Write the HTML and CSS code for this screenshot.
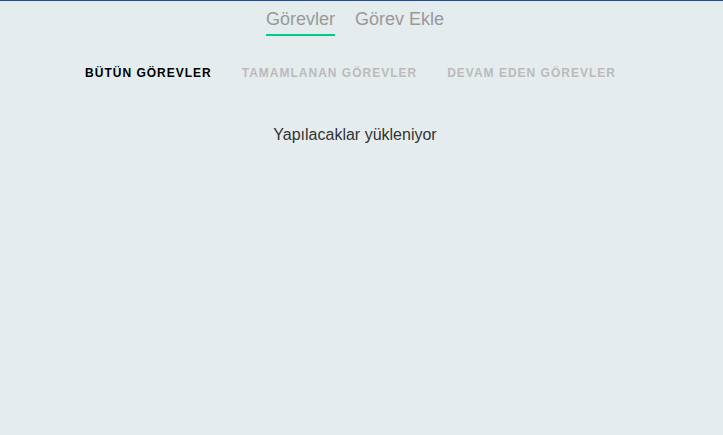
FILE: index.html
```html
<!DOCTYPE html>
<html>
<head>
<meta charset="utf-8">
<link rel="stylesheet" href="styles.css">
</head>
<body>
<div class="page">
  <nav class="nav">
    <a class="nav-link active">Görevler</a>
    <a class="nav-link">Görev Ekle</a>
  </nav>
  <div class="tabs">
    <span class="tab active">BÜTÜN GÖREVLER</span>
    <span class="tab">TAMAMLANAN GÖREVLER</span>
    <span class="tab">DEVAM EDEN GÖREVLER</span>
  </div>
  <p class="loading">Yapılacaklar yükleniyor</p>
</div>
</body>
</html>
```
FILE: styles.css
```css
html, body {
  margin: 0;
  padding: 0;
  height: 100%;
}
body {
  background: #e4ecee;
  border-top: 1px solid #2f4b7c;
  box-sizing: border-box;
  font-family: "Liberation Sans", Arial, sans-serif;
}
.page {
  width: 710px;
  display: flex;
  flex-direction: column;
  align-items: center;
}
.nav {
  display: flex;
  gap: 20px;
  padding-top: 7px;
}
.nav-link {
  font-size: 18px;
  color: #999;
  line-height: 22px;
  padding-bottom: 4px;
  border-bottom: 2px solid transparent;
}
.nav-link.active {
  border-bottom-color: #00cc88;
}
.tabs {
  display: flex;
  gap: 30px;
  margin-top: 30px;
  padding-right: 9px;
}
.tab {
  font-size: 12px;
  font-weight: bold;
  letter-spacing: 1px;
  color: #bbb;
  line-height: 14px;
}
.tab.active {
  color: #000;
}
.loading {
  margin: 45px 0 0;
  font-size: 16px;
  color: #333;
  line-height: 20px;
}
```
